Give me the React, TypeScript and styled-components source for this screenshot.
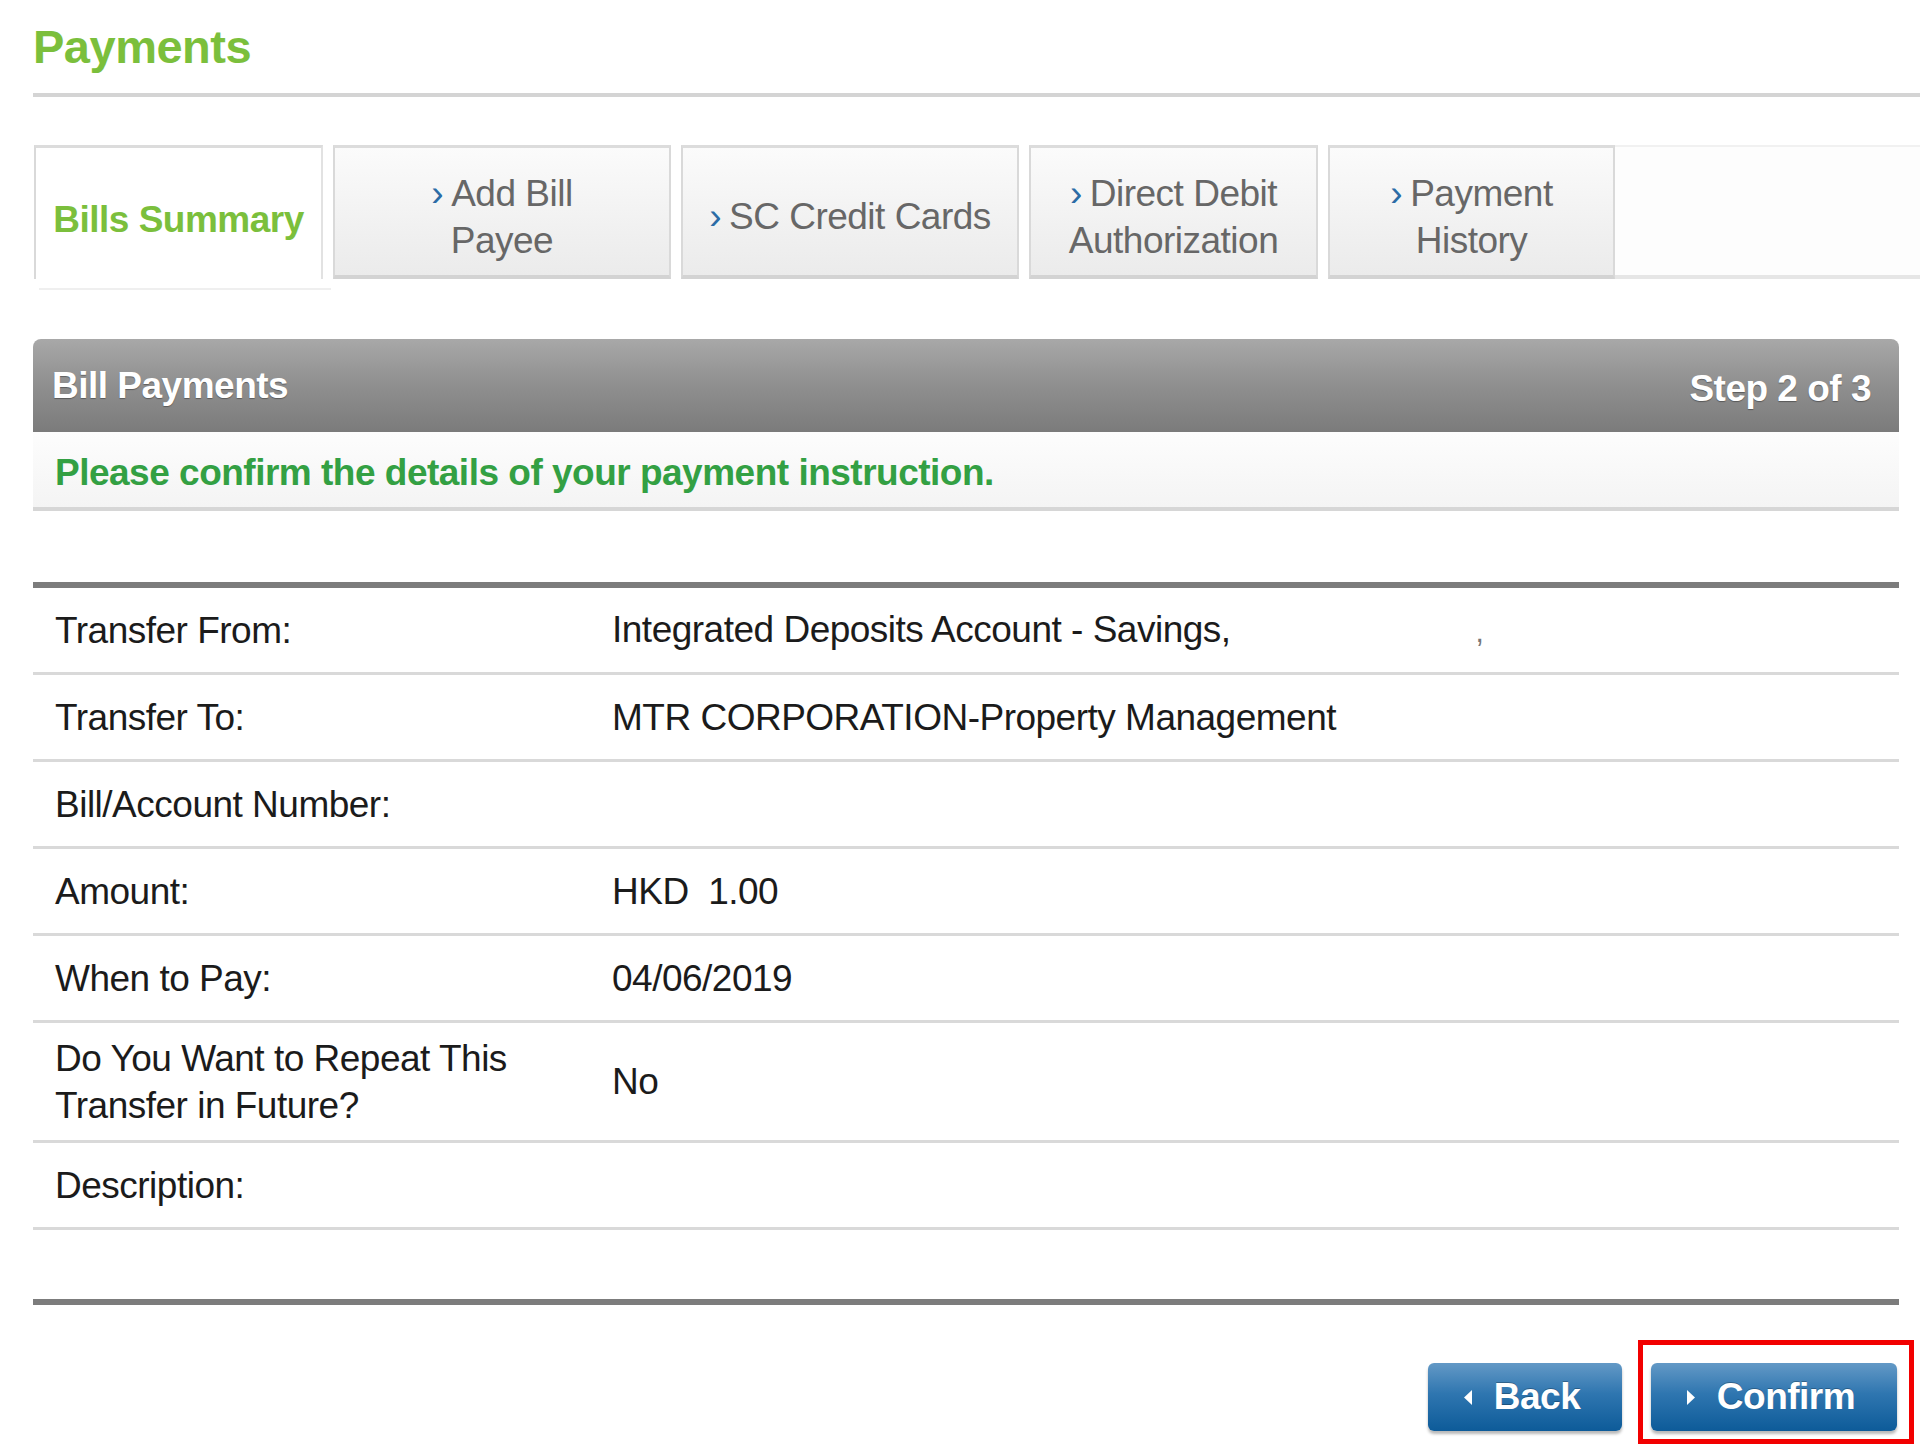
import React from 'react';
import styled, { createGlobalStyle } from 'styled-components';

const GlobalStyle = createGlobalStyle`
  html, body {
    margin: 0;
    padding: 0;
    background: #ffffff;
  }
  body {
    font-family: 'Liberation Sans', Arial, Helvetica, sans-serif;
    color: #1b1b1b;
  }
`;

// Page layout
const Page = styled.div`
  width: 1920px;
  min-height: 1450px;
  box-sizing: border-box;
  padding-left: 33px;
`;

const TitleBar = styled.div`
  padding-top: 17px;
  padding-bottom: 16px;
  border-bottom: 4px solid #d4d4d4;
`;

const Title = styled.h1`
  margin: 0;
  font-size: 47px;
  line-height: 60px;
  font-weight: 700;
  letter-spacing: -0.5px;
  color: #7bbf3c;
`;

// Tabs
const TabStrip = styled.div`
  display: flex;
  align-items: flex-start;
  gap: 10px;
  height: 134px;
  margin-top: 48px;
`;

interface TabProps {
  $active?: boolean;
  $w: number;
}

const Tab = styled.div<TabProps>`
  position: relative;
  box-sizing: border-box;
  flex: none;
  width: ${(p) => p.$w}px;
  height: 134px;
  display: flex;
  align-items: center;
  justify-content: center;
  text-align: center;
  padding-top: ${(p) => (p.$active ? 12 : 10)}px;
  margin-left: ${(p) => (p.$active ? 1 : 0)}px;
  font-size: 37px;
  line-height: 47px;
  letter-spacing: -0.5px;
  font-weight: ${(p) => (p.$active ? 700 : 400)};
  color: ${(p) => (p.$active ? '#7bbf3c' : '#676767')};
  background: ${(p) =>
    p.$active ? '#ffffff' : 'linear-gradient(to bottom, #fbfbfb 0%, #f1f1f1 60%, #ebebeb 100%)'};
  border-left: 2px solid #d9d9d9;
  border-right: 2px solid ${(p) => (p.$active ? '#e2e2e2' : '#d9d9d9')};
  border-top: 3px solid #dcdcdc;
  border-bottom: ${(p) => (p.$active ? 'none' : '4px solid #d3d3d3')};

  ${(p) =>
    p.$active &&
    `
    &::after {
      content: '';
      position: absolute;
      left: 3px;
      right: -10px;
      bottom: -11px;
      height: 2px;
      background: #efefef;
    }
  `}
`;

const Chevron = styled.span`
  color: #2b6ca6;
  margin-right: 8px;
`;

const TabFiller = styled.div`
  flex: 1;
  height: 134px;
  box-sizing: border-box;
  border-top: 2px solid #f1f1f1;
  border-bottom: 4px solid #e6e6e6;
  background: #fdfdfd;
  margin-left: -10px;
`;

// Panel
const Panel = styled.div`
  margin-top: 60px;
  margin-right: 21px;
`;

const PanelHeader = styled.div`
  height: 93px;
  box-sizing: border-box;
  display: flex;
  align-items: center;
  justify-content: space-between;
  padding: 0 28px 0 19px;
  border-radius: 8px 8px 0 0;
  background: linear-gradient(to bottom, #a8a8a8 0%, #919191 45%, #7b7b7b 100%);
  color: #ffffff;
  font-size: 37px;
  font-weight: 700;
  letter-spacing: -0.5px;
  text-shadow: 0 1px 1px rgba(0, 0, 0, 0.35);
`;

const StepText = styled.span`
  padding-top: 6px;
`;

const Notice = styled.div`
  height: 79px;
  box-sizing: border-box;
  display: flex;
  align-items: center;
  padding-left: 22px;
  padding-top: 6px;
  background: linear-gradient(to bottom, #fdfdfd 0%, #f4f4f4 100%);
  border-bottom: 4px solid #d6d6d6;
  color: #33a043;
  font-size: 37px;
  font-weight: 700;
  letter-spacing: -0.5px;
`;

const DetailTable = styled.div`
  margin-top: 71px;
  border-top: 6px solid #7c7c7c;
`;

interface RowProps {
  $tall?: boolean;
}

const Row = styled.div<RowProps>`
  display: grid;
  grid-template-columns: 557px 1fr;
  align-items: center;
  min-height: ${(p) => (p.$tall ? 117 : 84)}px;
  padding-left: 22px;
  border-bottom: 3px solid #d9d9d9;
  font-size: 37px;
  line-height: 47px;
  letter-spacing: -0.5px;
  color: #1b1b1b;
`;

const Label = styled.div``;

const Value = styled.div`
  white-space: pre;
`;

const Masked = styled.span`
  margin-left: 245px;
  font-size: 30px;
  color: #777777;
`;

const BottomRule = styled.div`
  margin-top: 69px;
  height: 6px;
  background: #7c7c7c;
`;

// Buttons
const ButtonBar = styled.div`
  display: flex;
  justify-content: flex-end;
  gap: 29px;
  margin-top: 58px;
  padding-right: 2px;
`;

const ConfirmWrap = styled.div`
  position: relative;

  &::after {
    content: '';
    position: absolute;
    top: -23px;
    left: -13px;
    right: -17px;
    bottom: -13px;
    border: 5px solid #f20000;
    pointer-events: none;
  }
`;

interface ButtonProps {
  $w: number;
}

const Button = styled.button<ButtonProps>`
  box-sizing: border-box;
  width: ${(p) => p.$w}px;
  height: 68px;
  display: flex;
  align-items: center;
  justify-content: center;
  gap: 22px;
  padding: 0 6px 0 0;
  border: none;
  border-radius: 6px;
  background: linear-gradient(to bottom, #6399c6 0%, #2f76b0 45%, #0d5b99 100%);
  box-shadow: 0 3px 3px rgba(0, 0, 0, 0.28);
  color: #ffffff;
  font-family: 'Liberation Sans', Arial, Helvetica, sans-serif;
  font-size: 37px;
  font-weight: 700;
  letter-spacing: -0.5px;
  text-shadow: 0 -1px 0 rgba(0, 0, 0, 0.25);
  cursor: pointer;
`;

const Arrow: React.FC<{ dir: 'left' | 'right' }> = ({ dir }) => (
  <svg width="8" height="15" viewBox="0 0 8 15">
    {dir === 'left' ? (
      <polygon points="8,0 8,15 0,7.5" fill="#ffffff" />
    ) : (
      <polygon points="0,0 0,15 8,7.5" fill="#ffffff" />
    )}
  </svg>
);

const tabs = [
  { label: ['Add Bill', 'Payee'], w: 338 },
  { label: ['SC Credit Cards'], w: 338 },
  { label: ['Direct Debit', 'Authorization'], w: 289 },
  { label: ['Payment', 'History'], w: 287 },
];

const rows: { label: React.ReactNode; value: React.ReactNode; tall?: boolean }[] = [
  {
    label: 'Transfer From:',
    value: (
      <>
        Integrated Deposits Account - Savings,<Masked>,</Masked>
      </>
    ),
  },
  { label: 'Transfer To:', value: 'MTR CORPORATION-Property Management' },
  { label: 'Bill/Account Number:', value: '' },
  { label: 'Amount:', value: 'HKD  1.00' },
  { label: 'When to Pay:', value: '04/06/2019' },
  {
    label: (
      <>
        Do You Want to Repeat This
        <br />
        Transfer in Future?
      </>
    ),
    value: 'No',
    tall: true,
  },
  { label: 'Description:', value: '' },
];

const App: React.FC = () => (
  <>
    <GlobalStyle />
    <Page>
      <TitleBar>
        <Title>Payments</Title>
      </TitleBar>

      <TabStrip>
        <Tab $active $w={289}>
          Bills Summary
        </Tab>
        {tabs.map((t) => (
          <Tab key={t.label.join(' ')} $w={t.w}>
            <div>
              <Chevron>›</Chevron>
              {t.label[0]}
              {t.label[1] && (
                <>
                  <br />
                  {t.label[1]}
                </>
              )}
            </div>
          </Tab>
        ))}
        <TabFiller />
      </TabStrip>

      <Panel>
        <PanelHeader>
          <span>Bill Payments</span>
          <StepText>Step 2 of 3</StepText>
        </PanelHeader>
        <Notice>Please confirm the details of your payment instruction.</Notice>

        <DetailTable>
          {rows.map((r, i) => (
            <Row key={i} $tall={r.tall}>
              <Label>{r.label}</Label>
              <Value>{r.value}</Value>
            </Row>
          ))}
        </DetailTable>

        <BottomRule />

        <ButtonBar>
          <Button $w={194}>
            <Arrow dir="left" />
            Back
          </Button>
          <ConfirmWrap>
            <Button $w={246}>
              <Arrow dir="right" />
              Confirm
            </Button>
          </ConfirmWrap>
        </ButtonBar>
      </Panel>
    </Page>
  </>
);

export default App;
